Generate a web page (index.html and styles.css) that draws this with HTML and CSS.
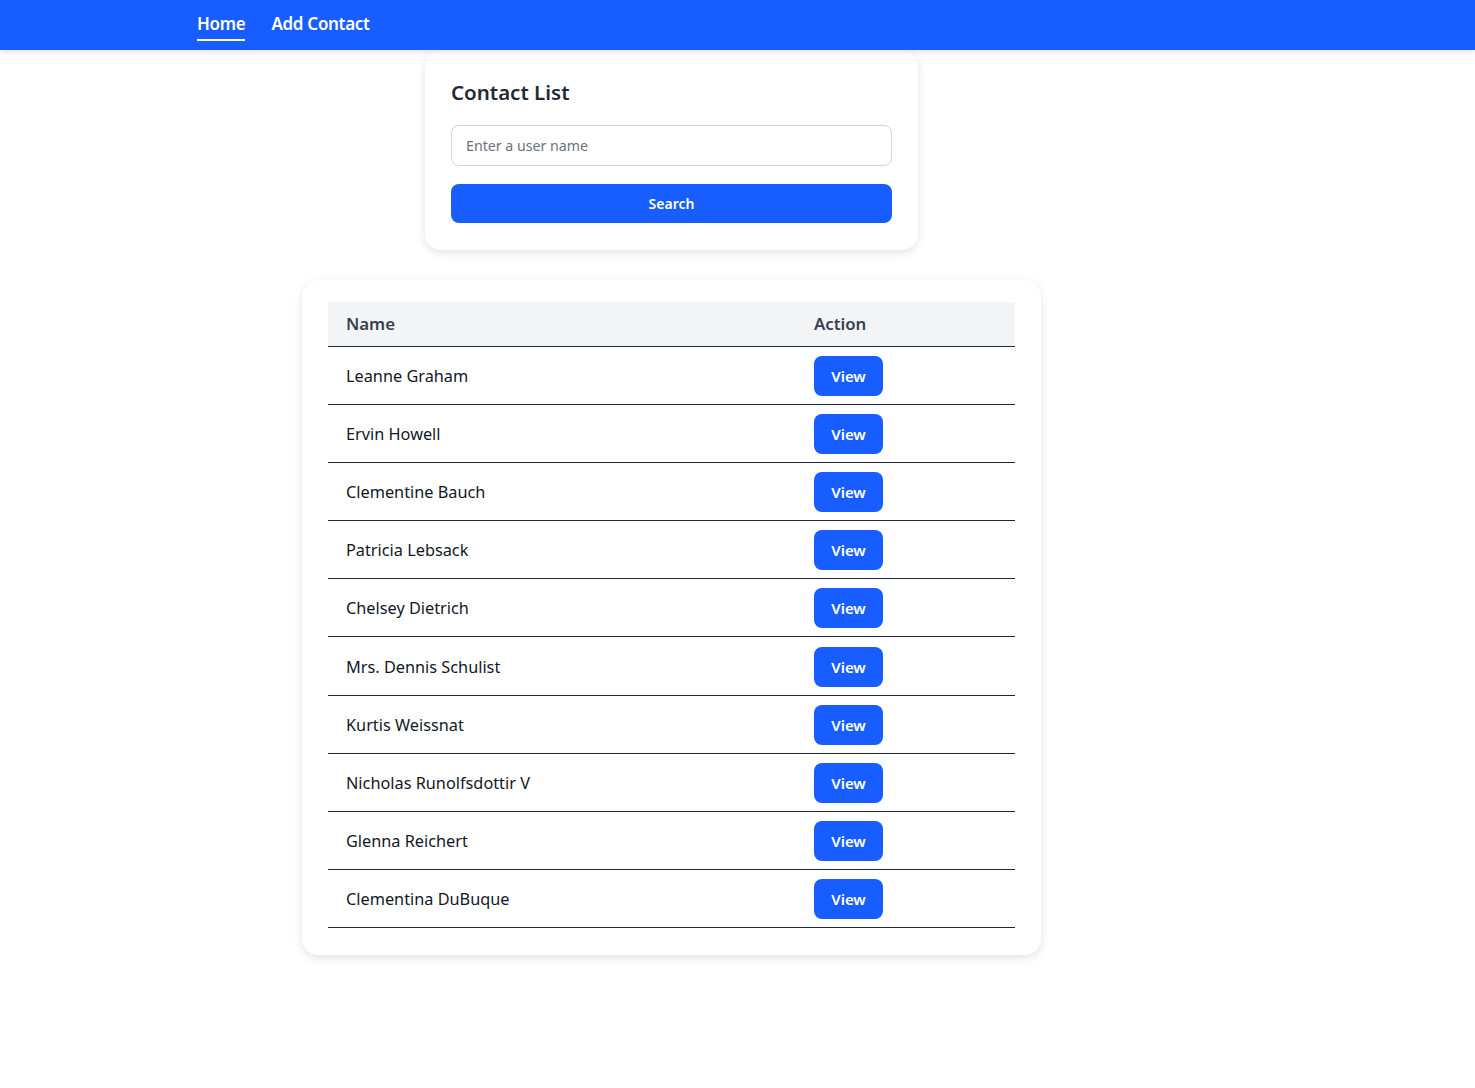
FILE: index.html
```html
<!DOCTYPE html>
<html lang="en">
<head>
<meta charset="utf-8">
<title>Contacts</title>
<link rel="stylesheet" href="styles.css">
</head>
<body>
<nav class="navbar">
  <a class="nav-link active" href="#">Home</a>
  <a class="nav-link" href="#">Add Contact</a>
</nav>
<main class="main">
  <section class="card search-card">
    <h1 class="title">Contact List</h1>
    <input class="input" type="text" placeholder="Enter a user name">
    <button class="btn btn-block">Search</button>
  </section>
  <section class="card table-card">
    <table class="table">
      <thead>
        <tr><th class="col-name">Name</th><th class="col-action">Action</th></tr>
      </thead>
      <tbody>
        <tr><td>Leanne Graham</td><td><button class="btn btn-view">View</button></td></tr>
        <tr><td>Ervin Howell</td><td><button class="btn btn-view">View</button></td></tr>
        <tr><td>Clementine Bauch</td><td><button class="btn btn-view">View</button></td></tr>
        <tr><td>Patricia Lebsack</td><td><button class="btn btn-view">View</button></td></tr>
        <tr><td>Chelsey Dietrich</td><td><button class="btn btn-view">View</button></td></tr>
        <tr><td>Mrs. Dennis Schulist</td><td><button class="btn btn-view">View</button></td></tr>
        <tr><td>Kurtis Weissnat</td><td><button class="btn btn-view">View</button></td></tr>
        <tr><td>Nicholas Runolfsdottir V</td><td><button class="btn btn-view">View</button></td></tr>
        <tr><td>Glenna Reichert</td><td><button class="btn btn-view">View</button></td></tr>
        <tr><td>Clementina DuBuque</td><td><button class="btn btn-view">View</button></td></tr>
      </tbody>
    </table>
  </section>
</main>
</body>
</html>
```

FILE: styles.css
```css
* { box-sizing: border-box; }
html, body { margin: 0; padding: 0; background: #fff; }
body {
  font-family: "Noto Sans", "Open Sans", sans-serif;
  color: #111827;
}
.navbar {
  height: 50px;
  background: #175dff;
  display: flex;
  align-items: center;
  gap: 26px;
  padding-left: 197px;
  box-shadow: 0 2px 6px rgba(0,0,0,0.12);
  position: relative;
  z-index: 1;
}
.nav-link {
  color: #fff;
  text-decoration: none;
  font-size: 17px;
  font-weight: 600;
  letter-spacing: -0.3px;
  line-height: 24px;
  padding: 0 0 3px;
  border-bottom: 2px solid transparent;
  margin-top: 3px;
}
.nav-link.active { border-bottom-color: #fff; }
.main {
  width: 1343px;
  display: flex;
  flex-direction: column;
  align-items: center;
  padding-bottom: 40px;
}
.card {
  background: #fff;
  border-radius: 16px;
  box-shadow: 0 3px 10px rgba(0,0,0,0.11);
}
.search-card {
  width: 493px;
  padding: 26px 26px 27px;
}
.title {
  margin: 0 0 17px;
  font-size: 20.5px;
  font-weight: 600;
  color: #1f2937;
  line-height: 32px;
}
.input {
  display: block;
  width: 100%;
  height: 41px;
  border: 1px solid #d1d5db;
  border-radius: 8px;
  padding: 0 14px;
  font-family: inherit;
  font-size: 14.2px;
  color: #111827;
  outline: none;
}
.input::placeholder { color: #6b7280; }
.btn {
  background: #175dff;
  color: #fff;
  border: 0;
  border-radius: 8px;
  font-family: inherit;
  font-weight: 600;
  font-size: 14px;
  cursor: pointer;
}
.btn-block {
  display: block;
  width: 100%;
  height: 39px;
  margin-top: 18px;
}
.table-card {
  width: 739px;
  margin-top: 30px;
  padding: 22px 26px 27px;
}
.table {
  width: 100%;
  border-collapse: collapse;
}
.table th {
  background: #f3f4f6;
  text-align: left;
  font-size: 16.8px;
  font-weight: 600;
  color: #374151;
  height: 44px;
  padding: 0 18px;
  border-bottom: 1px solid #1f2937;
}
.col-name { width: 468px; }
.table td {
  font-size: 16.3px;
  color: #111827;
  height: 58.2px;
  padding: 1px 18px 0;
  border-bottom: 1px solid #1f2937;
  vertical-align: middle;
}
.btn-view {
  display: block;
  width: 69px;
  height: 40px;
  font-size: 15px;
}
```
